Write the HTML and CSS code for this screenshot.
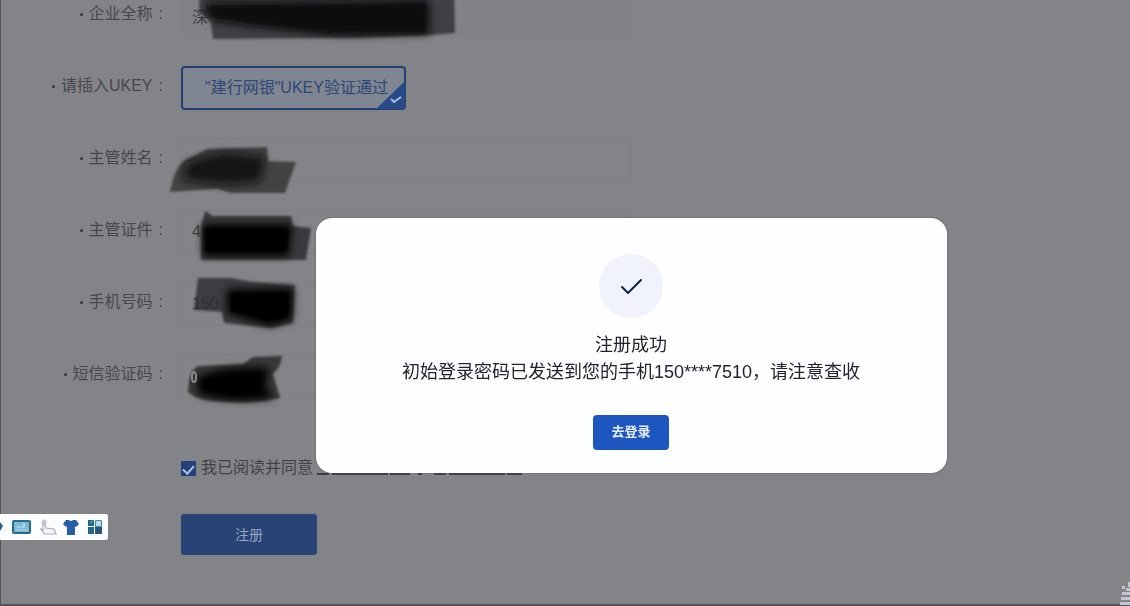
FILE: index.html
```html
<!DOCTYPE html>
<html lang="zh-CN">
<head>
<meta charset="utf-8">
<meta name="viewport" content="width=device-width, initial-scale=1">
<title>注册</title>
<link rel="stylesheet" href="styles.css">
</head>
<body>
<svg class="defs" aria-hidden="true">
  <defs>
    <filter id="soft" x="-10%" y="-20%" width="120%" height="140%"><feGaussianBlur stdDeviation="1.2"/></filter>
    <filter id="softer" x="-20%" y="-40%" width="140%" height="180%"><feGaussianBlur stdDeviation="4"/></filter>
  </defs>
</svg>
<main class="page">
  <form class="form">
    <div class="row">
      <label class="label" for="company"><span class="name">企业全称</span><span>:</span></label>
      <div class="field">
        <input class="input disabled" id="company" type="text" value="深" readonly>
        <svg class="mask" width="310" height="60" viewBox="0 0 310 60" aria-hidden="true">
          <path d="M39 0 L293 0 L294 45 L272 47 L200 50 L52 51 L50 34 L38 24Z" fill="#2c2c2d" opacity=".75" filter="url(#soft)"/>
          <path d="M44 15 L268 13 L268 46 L180 47 L90 38 L50 32Z" fill="#070708" filter="url(#softer)"/>
          <path d="M46 18 L266 15 L266 45 L170 45 L90 35 L52 29Z" fill="#070708" opacity=".7" filter="url(#soft)"/>
        </svg>
      </div>
    </div>
    <div class="row">
      <span class="label"><span class="name">请插入UKEY</span><span>:</span></span>
      <div class="field">
        <button class="ukey" type="button">"建行网银"UKEY验证通过
          <svg class="corner" width="29" height="28" viewBox="0 0 29 28" aria-hidden="true"><path d="M29 0V28H0Z" fill="#284a87"/><path d="M15 18l3 3 7-5" fill="none" stroke="#a9bddf" stroke-width="2"/></svg>
        </button>
      </div>
    </div>
    <div class="row">
      <label class="label" for="manager"><span class="name">主管姓名</span><span>:</span></label>
      <div class="field">
        <input class="input" id="manager" type="text">
        <svg class="mask" width="160" height="70" viewBox="0 0 160 70" aria-hidden="true">
          <path d="M9 60 Q14 34 24 28 L46 17 L106 15 L107 29 L135 30 L124 61 L70 61 L56 57Z" fill="#303132" opacity=".78" filter="url(#soft)"/>
          <path d="M26 30 L62 20 L104 24 L100 50 L62 53 L22 48Z" fill="#0d0e0f" opacity=".85" filter="url(#softer)"/>
        </svg>
      </div>
    </div>
    <div class="row">
      <label class="label" for="idcard"><span class="name">主管证件</span><span>:</span></label>
      <div class="field">
        <input class="input" id="idcard" type="text" value="4">
        <svg class="mask" width="160" height="70" viewBox="0 0 160 70" aria-hidden="true">
          <path d="M44 7 L52 12 L130 12 L132 22 L150 24 L145 56 L40 56 L40 22Z" fill="#27282a" opacity=".78" filter="url(#soft)"/>
          <path d="M42 20 L131 20 L128 52 L42 52Z" fill="#050506" filter="url(#softer)"/>
          <path d="M44 24 L128 24 L126 47 L44 48Z" fill="#050506" opacity=".8" filter="url(#soft)"/>
        </svg>
      </div>
    </div>
    <div class="row">
      <label class="label" for="phone"><span class="name">手机号码</span><span>:</span></label>
      <div class="field">
        <input class="input" id="phone" type="text" value="150">
        <svg class="mask" width="160" height="70" viewBox="0 0 160 70" aria-hidden="true">
          <path d="M37 2 L70 2 L92 6 L134 9 L132 47 L111 52 L63 47 L61 36 L33 34Z" fill="#2b2c2d" opacity=".78" filter="url(#soft)"/>
          <path d="M66 13 L132 12 L131 44 L108 50 L66 38Z" fill="#050506" filter="url(#softer)"/>
          <path d="M70 17 L128 16 L127 41 L108 45 L70 35Z" fill="#050506" opacity=".7" filter="url(#soft)"/>
        </svg>
      </div>
    </div>
    <div class="row">
      <label class="label" for="code"><span class="name">短信验证码</span><span>:</span></label>
      <div class="field">
        <input class="input" id="code" type="text">
        <svg class="mask" width="160" height="70" viewBox="0 0 160 70" aria-hidden="true">
          <path d="M27 44 Q28 20 38 18 L82 16 L92 9 L121 8 Q120 19 112 26 L119 50 Q90 57 50 53 Q34 51 27 44Z" fill="#252627" opacity=".8" filter="url(#soft)"/>
          <path d="M36 30 Q60 18 108 20 L104 38 L113 50 Q75 55 38 46Z" fill="#050506" filter="url(#softer)"/>
          <path d="M40 32 Q66 22 102 25 L98 44 Q75 51 42 43Z" fill="#050506" opacity=".6" filter="url(#softer)"/>
          <ellipse cx="33" cy="29" rx="2" ry="5" fill="none" stroke="#8b8c8e" stroke-width="2"/>
        </svg>
      </div>
    </div>
    <div class="row agree-row">
      <label class="agree"><input class="check" type="checkbox" checked><span>我已阅读并同意</span></label>
      <svg class="edge" width="205" height="2" viewBox="0 0 205 2" aria-hidden="true"><path d="M0 1H205" stroke="#3d3e43" stroke-width="2" stroke-dasharray="12 3 56 2 20 8 4 12"/></svg>
    </div>
    <div class="row submit-row">
      <button class="submit" type="button">注册</button>
    </div>
  </form>
</main>

<div class="overlay">
  <section class="modal" role="dialog" aria-modal="true" aria-labelledby="title">
    <svg class="success" width="66" height="66" viewBox="0 0 66 66" aria-hidden="true"><circle cx="33" cy="33" r="32" fill="#f0f3fb"/><path d="M24 34l6 6 13-13" fill="none" stroke="#0c2348" stroke-width="2" stroke-linecap="round" stroke-linejoin="round"/></svg>
    <h1 class="text" id="title">注册成功</h1>
    <p class="text">初始登录密码已发送到您的手机150****7510，请注意查收</p>
    <button class="go" type="button">去登录</button>
  </section>
</div>

<div class="ime">
  <svg width="108" height="26" viewBox="0 0 108 26" aria-hidden="true">
    <path d="M0 8l3 4-3 5z" fill="#2c5d88"/>
    <rect x="13" y="7" width="17" height="12" rx="1" fill="#7fb9d4" stroke="#286a91" stroke-width="2"/>
    <path d="M16 13h8M16 16h11" stroke="#b5dbe8" stroke-width="1"/><path d="M24 9v5" stroke="#d5edf5"/>
    <circle cx="44" cy="8" r="2.5" fill="#c3c8cf"/><path d="M43 10v6l-2-1 3 5h12l-2-5-8-1-1-4z" fill="#f2f4f6" stroke="#a5aeb9" stroke-width="1.2"/>
    <path d="M66 6h3q2 2 4 0h3l3 4-3 3-1-1v9h-8v-9l-1 1-3-3z" fill="#235ea7"/>
    <path d="M88 6h6v6h-6zM88 13h6v7h-6z" fill="#24658c"/><path d="M95 13h7v7h-7z" fill="#27567e"/><path d="M95.500 6.500h6v6h-6z" fill="#b8dce8" stroke="#4388a4"/><path d="M90 9l3-2" stroke="#79bad0"/>
  </svg>
</div>
<svg class="tray" width="10" height="24" viewBox="0 0 10 24" aria-hidden="true"><path d="M8 0h2v5H8zM2 4h3v3H2zM6 6h4v3H6zM2 10h8v3H2zM1 15h9v3H1zM0 20h10v3H0z" fill="#c4c6ce"/></svg>
</body>
</html>
```
FILE: styles.css
```css
* { box-sizing: border-box; }

body {
  margin: 0;
  min-height: 100vh;
  overflow: hidden;
  background: #838487;
  color: #47474c;
  font: 16px/24px "Liberation Sans", "Noto Sans CJK SC", sans-serif;
}

button, input { font: inherit; }

.defs { position: absolute; width: 0; height: 0; }

.page {
  height: 100vh;
  overflow: hidden;
  border-left: 1px solid #55535e;
  border-bottom: 2px solid #56535d;
}

/* The form is scrolled slightly past its first row */
.form {
  display: flex;
  flex-direction: column;
  gap: 28px;
  margin-top: -6px;
}

.row {
  display: grid;
  grid-template-columns: 162px minmax(0, 450px);
  column-gap: 18px;
}

.label {
  display: flex;
  justify-content: flex-end;
  align-items: center;
  gap: 6px;
  height: 40px;
}

.name {
  display: flex;
  align-items: center;
  gap: 6px;
}

.name::before {
  content: "";
  width: 3px;
  height: 3px;
  border-radius: 50%;
  background: #35353a;
}

.field { position: relative; height: 44px; }

.input {
  width: 100%;
  height: 44px;
  padding: 0 10px;
  border: 1px solid #7e7f82;
  border-radius: 3px;
  background: transparent;
  color: #3f4044;
}

.disabled { background: #818285; border-color: #818285; }

.mask {
  position: absolute;
  top: -6px;
  left: -20px;
  pointer-events: none;
}

.ukey {
  position: relative;
  height: 44px;
  padding: 0 16px 0 22px;
  border: 2px solid #243f70;
  border-radius: 4px;
  background: #7f8591;
  color: #2e4775;
  white-space: nowrap;
}

.corner { position: absolute; right: -1px; bottom: -1px; }

.agree-row, .submit-row { padding-left: 180px; display: flex; }

.agree-row { padding-top: 30px; gap: 4px; }

.agree {
  display: flex;
  align-items: center;
  gap: 5px;
  color: #414146;
}

.edge { align-self: flex-end; margin-bottom: 5px; }

.check {
  appearance: none;
  width: 15px;
  height: 15px;
  margin: 0;
  border-radius: 1px;
  background: #23427b;
  display: grid;
  place-items: center;
}

.check::before {
  content: "";
  width: 9px;
  height: 5px;
  border: solid #b4c2db;
  border-width: 0 0 2px 2px;
  rotate: -48deg;
}

.submit-row { padding-top: 6px; }

.submit {
  width: 136px;
  height: 41px;
  border: 0;
  border-radius: 3px;
  background: #284376;
  color: #9ba7bd;
  font-size: 14px;
}

.overlay {
  position: fixed;
  inset: 0;
  display: flex;
  align-items: center;
  justify-content: center;
  padding: 84px 0 0 132px;
}

.modal {
  width: 100%;
  max-width: 631px;
  display: flex;
  flex-direction: column;
  align-items: center;
  padding: 35px 24px 23px;
  border-radius: 16px;
  background: #fdfeff;
  box-shadow: 0 0 2px #55565a;
  color: #25212d;
}

.success { margin-bottom: 13px; }

.text {
  margin: 0;
  font-size: 18px;
  font-weight: 400;
  line-height: 27px;
  text-align: center;
}

.go {
  width: 76px;
  height: 35px;
  margin-top: 29px;
  border: 0;
  border-radius: 4px;
  background: #1d56bf;
  color: #e4edfb;
  font-size: 13px;
  font-weight: 700;
}

.ime {
  position: fixed;
  left: 0;
  bottom: 66px;
  display: flex;
  border-radius: 0 2px 2px 0;
  background: #fbfdfe;
}

.tray { position: fixed; right: 0; bottom: 0; }
```
